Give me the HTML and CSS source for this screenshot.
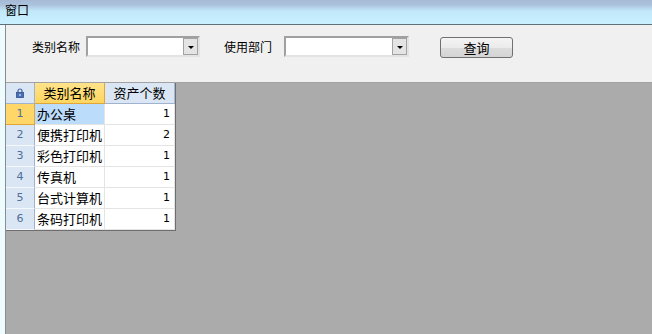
FILE: index.html
```html
<!DOCTYPE html>
<html lang="zh">
<head>
<meta charset="utf-8">
<title>窗口</title>
<link rel="stylesheet" href="styles.css">
</head>
<body>
<div class="titlebar"><span class="title">窗口</span></div>
<div class="main">
  <div class="frame-left"></div>
  <div class="client">
    <div class="toolbar">
      <span class="label">类别名称</span>
      <div class="combo combo1"><div class="combo-btn"><span class="tri"></span></div></div>
      <span class="label label2">使用部门</span>
      <div class="combo combo2"><div class="combo-btn"><span class="tri"></span></div></div>
      <div class="btn">查询</div>
    </div>
    <div class="workspace">
      <div class="grid">
        <div class="cell corner">
          <svg width="8" height="10" viewBox="0 0 8 10">
            <path d="M2 4.5V3a2 2 0 0 1 4 0v1.5" fill="none" stroke="#3f5fa0" stroke-width="1.2"/>
            <rect x="0.5" y="4.5" width="7" height="5" fill="#4a6fb5" stroke="#2f4f8f" stroke-width="0.8"/>
            <rect x="3.4" y="6" width="1.2" height="2" fill="#cfe0ff"/>
          </svg>
        </div>
        <div class="cell head head-active">类别名称</div>
        <div class="cell head">资产个数</div>

        <div class="cell rowhead rowhead-active">1</div>
        <div class="cell name selected">办公桌</div>
        <div class="cell num">1</div>

        <div class="cell rowhead">2</div>
        <div class="cell name">便携打印机</div>
        <div class="cell num">2</div>

        <div class="cell rowhead">3</div>
        <div class="cell name">彩色打印机</div>
        <div class="cell num">1</div>

        <div class="cell rowhead">4</div>
        <div class="cell name">传真机</div>
        <div class="cell num">1</div>

        <div class="cell rowhead">5</div>
        <div class="cell name">台式计算机</div>
        <div class="cell num">1</div>

        <div class="cell rowhead">6</div>
        <div class="cell name">条码打印机</div>
        <div class="cell num">1</div>
      </div>
    </div>
  </div>
</div>
</body>
</html>
```

FILE: styles.css
```css
html, body {
  margin: 0;
  padding: 0;
  width: 652px;
  height: 334px;
  overflow: hidden;
  font-family: "Noto Sans CJK SC", "Liberation Sans", sans-serif;
  font-size: 12px;
  color: #000;
}

.titlebar {
  height: 24px;
  border-bottom: 1px solid #5f7079;
  background: linear-gradient(#a6bad6 0px, #abc2dc 5px, #c2e8fa 11px, #c8f1ff 24px);
  box-sizing: content-box;
}

.title {
  display: inline-block;
  padding-left: 5px;
  line-height: 20px;
  font-size: 12px;
}

.main {
  display: flex;
  height: 309px;
}

.frame-left {
  width: 5px;
  background: #eefbff;
}

.client {
  flex: 1;
  display: flex;
  flex-direction: column;
  border-left: 1px solid #8c8c8c;
}

.toolbar {
  height: 58px;
  background: #f0f0f0;
  border-bottom: 1px solid #a2a2a2;
  display: flex;
  align-items: flex-start;
  padding: 11px 0 0 26px;
  box-sizing: border-box;
}

.label {
  width: 48px;
  line-height: 21px;
  margin-right: 6px;
  white-space: nowrap;
}

.label2 {
  margin-left: 24px;
  margin-right: 12px;
}

.combo {
  height: 21px;
  box-sizing: border-box;
  background: #fff;
  border-top: 2px solid #a0a0a0;
  border-left: 2px solid #a0a0a0;
  border-right: 2px solid #e3e3e3;
  border-bottom: 2px solid #e3e3e3;
  display: flex;
  justify-content: flex-end;
}

.combo1 { width: 114px; }
.combo2 { width: 125px; }

.combo-btn {
  width: 15px;
  height: 17px;
  box-sizing: border-box;
  border: 1px solid #a3a3a3;
  background: #e4e4e4;
  display: flex;
  align-items: center;
  justify-content: center;
}

.tri {
  width: 0;
  height: 0;
  border-left: 3px solid transparent;
  border-right: 3px solid transparent;
  border-top: 3px solid #000;
  margin-top: 1px;
}

.btn {
  margin-left: 31px;
  margin-top: 1px;
  width: 73px;
  height: 21px;
  box-sizing: border-box;
  border: 1px solid #707070;
  border-radius: 3px;
  background: linear-gradient(#f4f4f4 0%, #ebebeb 50%, #dddddd 51%, #d4d4d4 100%);
  text-align: center;
  line-height: 19px;
  font-size: 13px;
}

.workspace {
  flex: 1;
  background: #ababab;
}

.grid {
  display: grid;
  grid-template-columns: 29px 70px 70px;
  grid-template-rows: 21px repeat(6, 21px);
  width: 169px;
  border-right: 1px solid #6e6e6e;
  border-bottom: 1px solid #6e6e6e;
  background: #fff;
}

.cell {
  box-sizing: border-box;
  border-right: 1px solid #e4e4e4;
  border-bottom: 1px solid #e4e4e4;
  line-height: 20px;
  white-space: nowrap;
  overflow: hidden;
}

.corner {
  background: #dbe6f4;
  border-right: 1px solid #9fb3cf;
  border-bottom: 1px solid #9fb3cf;
  display: flex;
  align-items: center;
  justify-content: center;
}

.head {
  background: #dbe6f4;
  border-right: 1px solid #a4b8d3;
  border-bottom: 1px solid #9fb3cf;
  text-align: center;
  font-size: 13px;
}

.head-active {
  background: linear-gradient(#ffe38a, #fdd660);
  border-right: 1px solid #e2a53a;
  border-bottom: 1px solid #e2a53a;
}

.rowhead {
  background: #dbe6f4;
  border-right: 1px solid #9fb3cf;
  border-bottom: 1px solid #f4f7fb;
  text-align: center;
  color: #4d6f9a;
  font-family: "DejaVu Sans", sans-serif;
  font-size: 11px;
}

.rowhead-active {
  background: #fed768;
  border-right: 1px solid #e2a53a;
  border-bottom: 1px solid #e2a53a;
}

.name {
  padding-left: 2px;
  font-size: 13px;
}

.selected {
  background: #bcdcfc;
}

.num {
  text-align: right;
  padding-right: 4px;
  font-family: "DejaVu Sans", sans-serif;
  font-size: 11px;
}
```
